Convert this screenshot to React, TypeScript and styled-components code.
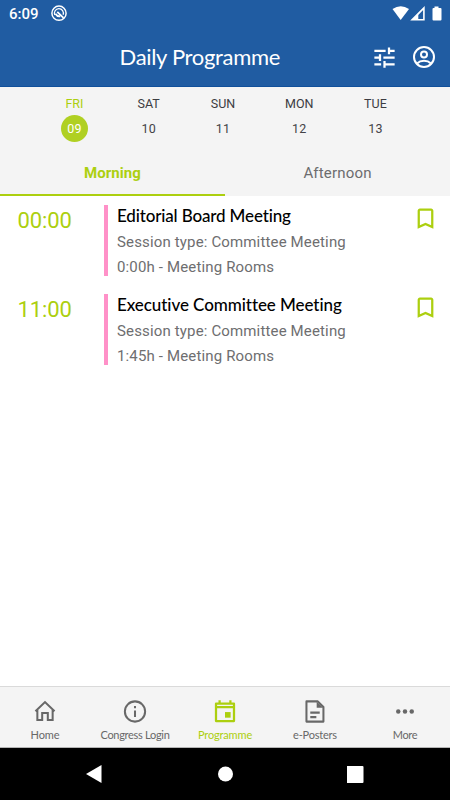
import React from 'react';
import styled, { createGlobalStyle } from 'styled-components';
import { MdBookmarkBorder, MdTune } from 'react-icons/md';

const Global = createGlobalStyle`
  * { box-sizing: border-box; }
  html, body { margin: 0; background: #fff; }
  body { font-family: Roboto, sans-serif; font-variant-ligatures: none; }
`;

const blue = '#205ca2';
const lime = '#accf0f';

const Screen = styled.div`
  width: 450px;
  height: 800px;
  display: flex;
  flex-direction: column;
  overflow: hidden;
  background: #fff;
`;

const StatusBar = styled.div`
  height: 28px;
  flex: none;
  display: flex;
  align-items: center;
  background: ${blue};
  color: #fff;
  padding: 0 8px 0 9px;
`;

const Clock = styled.span`
  width: 41px;
  font-size: 15px;
  font-weight: 500;
  line-height: 28px;
  white-space: nowrap;
`;

const StatusIcons = styled.div`
  margin-left: auto;
  display: flex;
  align-items: center;
`;

const Header = styled.header`
  height: 59px;
  flex: none;
  display: flex;
  align-items: center;
  padding: 0 12px 0 119.5px;
  background: ${blue};
  border-bottom: 1px solid #10509b;
  color: #fff;
`;

const Title = styled.h1`
  flex: 1;
  margin: 0;
  font-family: Lato, sans-serif;
  font-weight: 400;
  font-size: 22px;
  line-height: 58px;
  letter-spacing: -0.31px;
  white-space: nowrap;
`;

const IconButton = styled.button`
  padding: 0;
  border: 0;
  background: none;
  display: flex;
  color: inherit;
  & + & { margin-left: 12px; }
`;

const Days = styled.div`
  height: 63px;
  flex: none;
  display: grid;
  grid-template-columns: 74.5px 74px 74.5px 78px 74.5px;
  padding: 8px 0 0 37.2px;
  background: #f4f4f4;
`;

const Day = styled.div<{ $active?: boolean }>`
  display: flex;
  flex-direction: column;
  align-items: center;
  font-size: 12.5px;
  line-height: 17px;
  color: ${p => (p.$active ? lime : '#3c3c42')};
`;

const DayNumber = styled.span<{ $active?: boolean }>`
  width: 27px;
  height: 27px;
  margin-top: 3px;
  border-radius: 50%;
  line-height: 28px;
  text-align: center;
  letter-spacing: 0.2px;
  background: ${p => (p.$active ? '#b0d022' : 'transparent')};
  color: ${p => (p.$active ? '#fff' : '#434347')};
`;

const Tabs = styled.div`
  height: 46px;
  flex: none;
  display: grid;
  grid-template-columns: 1fr 1fr;
  background: #f4f4f4;
`;

const Tab = styled.button<{ $active?: boolean }>`
  border: 0;
  border-bottom: 2px solid ${p => (p.$active ? lime : 'transparent')};
  padding: 2px 0 0;
  background: none;
  font: ${p => (p.$active ? 700 : 400)} 15px/42px Roboto, sans-serif;
  letter-spacing: ${p => (p.$active ? 0.05 : 0.18)}px;
  color: ${p => (p.$active ? lime : '#6c6c6e')};
`;

const List = styled.main`
  flex: 1;
  display: flex;
  flex-direction: column;
  gap: 18px;
  padding-top: 9px;
`;

const Session = styled.article`
  height: 71px;
  display: grid;
  grid-template-columns: 104px 4px 1fr 27px;
  grid-template-rows: 71px;
  padding-right: 11.5px;
`;

const Time = styled.time`
  padding-left: 17.5px;
  font-size: 22px;
  line-height: 31px;
  letter-spacing: -0.1px;
  color: ${lime};
`;

const Track = styled.div`
  background: #ff91c8;
`;

const Details = styled.div`
  padding-left: 9px;
`;

const SessionTitle = styled.h2<{ $spacing: number }>`
  margin: 0 0 3px;
  font-family: Lato, sans-serif;
  font-weight: 500;
  font-size: 17px;
  line-height: 22px;
  letter-spacing: ${p => p.$spacing}px;
  color: #000;
  white-space: nowrap;
`;

const Meta = styled.p`
  margin: 0;
  font-size: 15px;
  line-height: 25px;
  letter-spacing: 0.15px;
  color: #6e6e70;
  white-space: nowrap;
`;

const Bookmark = styled(MdBookmarkBorder)`
  color: ${lime};
`;

const Nav = styled.nav`
  height: 62px;
  flex: none;
  display: grid;
  grid-template-columns: repeat(5, 1fr);
  background: #f4f4f4;
  border-top: 1px solid #dadada;
  border-bottom: 1px solid #b4b4b4;
`;

const NavItem = styled.a<{ $active?: boolean; $spacing: number }>`
  display: flex;
  flex-direction: column;
  align-items: center;
  padding-top: 11px;
  font-family: Lato, sans-serif;
  font-size: 11px;
  line-height: 19px;
  letter-spacing: ${p => p.$spacing}px;
  color: ${p => (p.$active ? lime : '#686868')};
  white-space: nowrap;
  svg { flex: none; }
`;

const SystemBar = styled.div`
  height: 52px;
  flex: none;
  display: grid;
  grid-template-columns: 16px 16px 17px;
  column-gap: 114.5px;
  align-items: center;
  padding-left: 86px;
  background: #000;
`;

const NavIcon = ({ children }: { children: React.ReactNode }) => (
  <svg width="26" height="27" viewBox="0.44 0 23.12 24" fill="none" stroke="currentColor" strokeWidth="1.8">
    {children}
  </svg>
);

const days = [
  ['FRI', '09'],
  ['SAT', '10'],
  ['SUN', '11'],
  ['MON', '12'],
  ['TUE', '13'],
];

const sessions = [
  { time: '00:00', title: 'Editorial Board Meeting', spacing: -0.15, place: '0:00h - Meeting Rooms' },
  { time: '11:00', title: 'Executive Committee Meeting', spacing: -0.07, place: '1:45h - Meeting Rooms' },
];

const navItems = [
  {
    label: 'Home',
    spacing: -0.1,
    icon: <path d="M3.500 11.700 12 3.600l8.500 8.100M5.200 10v9.600h4.300v-6.300h5v6.300h4.300V10" />,
  },
  {
    label: 'Congress Login',
    spacing: -0.3,
    icon: (
      <>
        <circle cx="12" cy="12" r="9" />
        <path d="M12 11v6M12 7v2" />
      </>
    ),
  },
  {
    label: 'Programme',
    spacing: -0.15,
    icon: (
      <>
        <path d="M4 5h16v15.500H4zM4 8h16M7.200 2v3M16.800 2v3" strokeWidth="2" strokeLinejoin="round" />
        <path d="M12 12.500h5v5h-5z" fill="currentColor" stroke="none" />
      </>
    ),
  },
  {
    label: 'e-Posters',
    spacing: -0.2,
    icon: (
      <>
        <path d="M4.400 3h10.100l5 5v13H4.400z" strokeLinejoin="round" />
        <path d="M13.500 3v5.700h5.700z" fill="currentColor" stroke="none" />
        <path d="M7.800 13h8.400M7.800 17h5.400" />
      </>
    ),
  },
  {
    label: 'More',
    spacing: -0.35,
    icon: (
      <g fill="currentColor" stroke="none">
        <circle cx="6" cy="12" r="2" />
        <circle cx="12" cy="12" r="2" />
        <circle cx="18" cy="12" r="2" />
      </g>
    ),
  },
];

export default function App() {
  return (
    <Screen>
      <Global />
      <StatusBar>
        <Clock>6:09</Clock>
        <svg width="18" height="18" viewBox="0 0 18 18" fill="none" stroke="#fff" strokeWidth="1.5">
          <circle cx="9" cy="8.200" r="7.100" />
          <path d="M4.800 10A4.500 4.500 0 1 1 13.100 9.800" strokeWidth="1.300" />
          <path d="M7.300 6.800 13.500 12.800M5.400 8.800c1 1.800 2.500 2.800 4.800 2.500" strokeWidth="1.800" />
        </svg>
        <StatusIcons>
          <svg width="50" height="16" viewBox="0 0 50 16" fill="#fff">
            <path d="M.5 3Q8.700-2.600 17 3L8.700 14z" />
            <path d="M18.200 14.500 32.700 0v14.500zM26.300 13h4.800V4.100l-4.800 4.800z" fillRule="evenodd" />
            <path d="M40.500 2h2V.5h4V2h2q1 0 1 1v10.500q0 1-1 1h-7q-1 0-1-1V3q0-1 1-1z" />
          </svg>
        </StatusIcons>
      </StatusBar>
      <Header>
        <Title>Daily Programme</Title>
        <IconButton aria-label="Filter">
          <MdTune size={27} />
        </IconButton>
        <IconButton aria-label="Account">
          <svg width="28" height="28" viewBox="0 0 28 28" fill="none" stroke="currentColor" strokeWidth="2">
            <circle cx="14" cy="14" r="10" />
            <circle cx="14" cy="11.400" r="3" />
            <path d="M7 20.500q2.800-2.700 7-2.700t7 2.700" />
          </svg>
        </IconButton>
      </Header>
      <Days>
        {days.map(([name, date], i) => (
          <Day key={name} $active={i === 0}>
            {name}
            <DayNumber $active={i === 0}>{date}</DayNumber>
          </Day>
        ))}
      </Days>
      <Tabs>
        <Tab $active>Morning</Tab>
        <Tab>Afternoon</Tab>
      </Tabs>
      <List>
        {sessions.map(s => (
          <Session key={s.time}>
            <Time>{s.time}</Time>
            <Track />
            <Details>
              <SessionTitle $spacing={s.spacing}>{s.title}</SessionTitle>
              <Meta>Session type: Committee Meeting</Meta>
              <Meta>{s.place}</Meta>
            </Details>
            <Bookmark size={27} />
          </Session>
        ))}
      </List>
      <Nav>
        {navItems.map(n => (
          <NavItem key={n.label} $active={n.label === 'Programme'} $spacing={n.spacing}>
            <NavIcon>{n.icon}</NavIcon>
            {n.label}
          </NavItem>
        ))}
      </Nav>
      <SystemBar>
        <svg width="16" height="18" viewBox="0 0 16 18" fill="#fff">
          <path d="M0 9 15.500 0v18z" />
        </svg>
        <svg width="16" height="16" viewBox="0 0 16 16" fill="#fff">
          <circle cx="8.500" cy="8" r="7.500" />
        </svg>
        <svg width="17" height="17" viewBox="0.500 0 17 17" fill="#fff">
          <rect width="17" height="17" rx="1" />
        </svg>
      </SystemBar>
    </Screen>
  );
}
